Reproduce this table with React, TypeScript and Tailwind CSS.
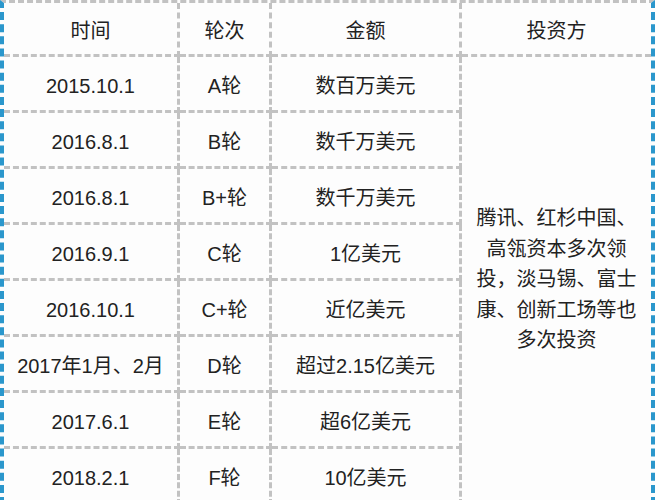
import * as React from 'react';

interface Round {
  readonly date: string;
  readonly round: string;
  readonly amount: string;
}

const rounds: Array<Round> = [
  { date: '2015.10.1', round: 'A轮', amount: '数百万美元' },
  { date: '2016.8.1', round: 'B轮', amount: '数千万美元' },
  { date: '2016.8.1', round: 'B+轮', amount: '数千万美元' },
  { date: '2016.9.1', round: 'C轮', amount: '1亿美元' },
  { date: '2016.10.1', round: 'C+轮', amount: '近亿美元' },
  { date: '2017年1月、2月', round: 'D轮', amount: '超过2.15亿美元' },
  { date: '2017.6.1', round: 'E轮', amount: '超6亿美元' },
  { date: '2018.2.1', round: 'F轮', amount: '10亿美元' },
];

const investorLines = ['腾讯、红杉中国、', '高瓴资本多次领', '投，淡马锡、富士', '康、创新工场等也', '多次投资'];

const cellBase = 'flex items-center justify-center pt-[4px] border-dashed border-[#c2c2c2] border-b-[3px] whitespace-nowrap';

function App() {
  return (
    <div className="w-[655px] h-[500px] overflow-hidden bg-[#fdfdfd]">
      <div
        className="w-[655px] border-l-4 border-r-4 border-t-[3px] border-dashed border-l-[#2b97cc] border-r-[#2b97cc] border-t-[#c2c2c2] text-[20px] text-[#222] grid grid-cols-[176px_92px_190px_189px]"
        style={{ fontFamily: '"Liberation Sans", "Noto Sans CJK SC", sans-serif' }}
      >
        <div className={`${cellBase} border-r-[3px] h-[54px]`}>时间</div>
        <div className={`${cellBase} border-r-[3px] h-[54px]`}>轮次</div>
        <div className={`${cellBase} border-r-[3px] h-[54px]`}>金额</div>
        <div className={`${cellBase} h-[54px]`}>投资方</div>

        {rounds.map((r, i) => (
          <React.Fragment key={`${r.date}-${r.round}`}>
            <div className={`${cellBase} border-r-[3px] h-[56px]`} style={{ gridRow: i + 2, gridColumn: 1 }}>
              {r.date}
            </div>
            <div className={`${cellBase} border-r-[3px] h-[56px]`} style={{ gridRow: i + 2, gridColumn: 2 }}>
              {r.round}
            </div>
            <div className={`${cellBase} border-r-[3px] h-[56px]`} style={{ gridRow: i + 2, gridColumn: 3 }}>
              {r.amount}
            </div>
          </React.Fragment>
        ))}

        <div className="col-start-4 row-start-2 row-span-8 flex flex-col items-center justify-center text-center leading-[30.5px] border-b-[3px] border-dashed border-[#c2c2c2]">
          {investorLines.map(line => (
            <span className="whitespace-nowrap" key={line}>
              {line}
            </span>
          ))}
        </div>
      </div>
    </div>
  );
}

export default App;
